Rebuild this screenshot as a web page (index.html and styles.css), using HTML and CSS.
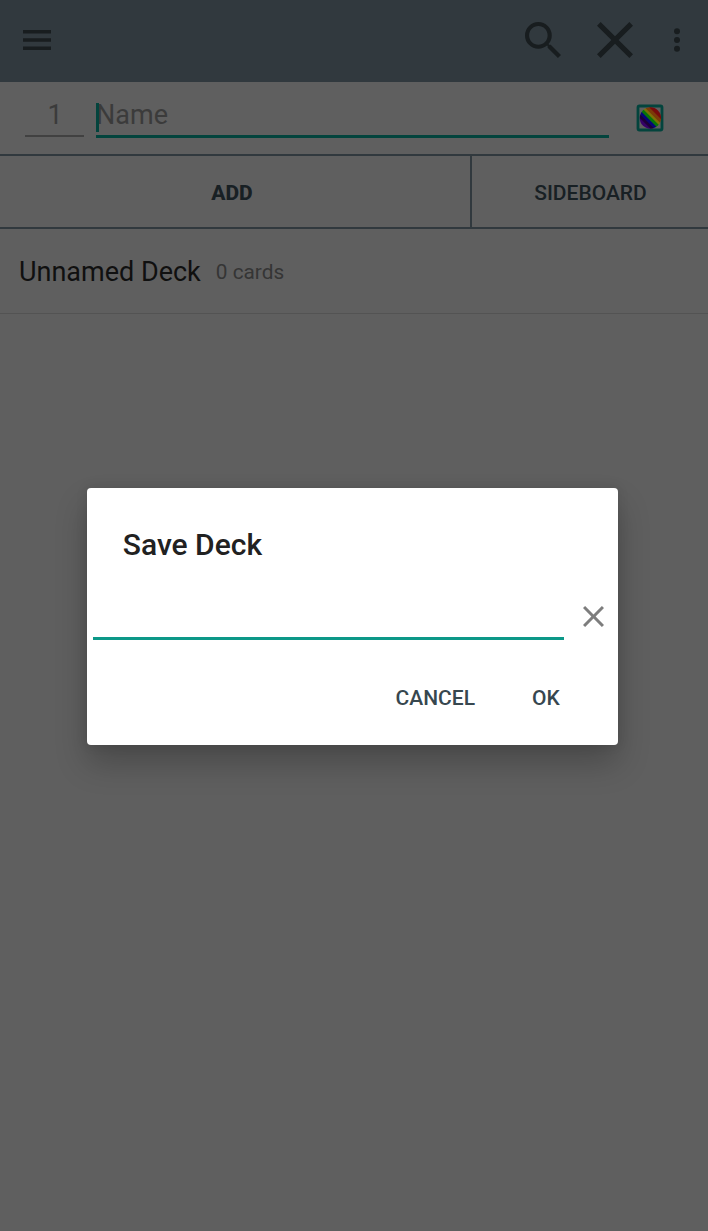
FILE: index.html
```html
<!DOCTYPE html>
<html lang="en">
<head>
<meta charset="utf-8">
<title>Deck editor</title>
<link rel="stylesheet" href="styles.css">
</head>
<body>
<header class="toolbar">
  <svg class="icon-menu" viewBox="0 0 28 20"><path d="M0 0h28v3.6H0zM0 8.2h28v3.6H0zM0 16.4h28v3.6H0z"/></svg>
  <svg class="icon-search" viewBox="3 3 17.49 17.49"><path d="M15.5 14h-.79l-.28-.27A6.471 6.471 0 0 0 16 9.5 6.5 6.5 0 1 0 9.5 16c1.61 0 3.09-.59 4.23-1.57l.27.28v.79l5 4.99L20.49 19l-4.99-5zm-6 0C7.01 14 5 11.99 5 9.5S7.01 5 9.5 5 14 7.01 14 9.5 11.99 14 9.5 14z"/></svg>
  <svg class="icon-close" viewBox="5 5 14 14"><path d="M19 6.41 17.59 5 12 10.59 6.41 5 5 6.41 10.59 12 5 17.59 6.41 19 12 13.41 17.59 19 19 17.59 13.41 12z"/></svg>
  <svg class="icon-more" viewBox="0 0 6 24"><circle cx="3" cy="3.2" r="3"/><circle cx="3" cy="12" r="3"/><circle cx="3" cy="20.8" r="3"/></svg>
</header>
<section class="entry">
  <div class="count">1</div>
  <div class="name"><span class="caret"></span>Name</div>
  <svg class="swatch" viewBox="0 0 28 28">
    <defs>
      <linearGradient id="rainbow" x1="1" y1="0" x2="0" y2="1">
        <stop offset=".26" stop-color="#780b0b"/>
        <stop offset=".3" stop-color="#7b3b08"/><stop offset=".37" stop-color="#7b3b08"/>
        <stop offset=".4" stop-color="#7b7205"/><stop offset=".45" stop-color="#7b7205"/>
        <stop offset=".48" stop-color="#087408"/><stop offset=".55" stop-color="#087408"/>
        <stop offset=".58" stop-color="#060678"/><stop offset=".64" stop-color="#060678"/>
        <stop offset=".67" stop-color="#1c0038"/><stop offset=".73" stop-color="#1c0038"/>
        <stop offset=".77" stop-color="#350068"/>
      </linearGradient>
    </defs>
    <rect class="swatch-box" x="2" y="2" width="24" height="24" rx="1.5"/>
    <circle cx="14.4" cy="14" r="10.7" fill="url(#rainbow)"/>
  </svg>
</section>
<nav class="tabs">
  <div class="tab tab-add">ADD</div>
  <div class="tab tab-side">SIDEBOARD</div>
</nav>
<section class="deck">
  <span class="deck-name">Unnamed Deck</span>
  <span class="deck-count">0 cards</span>
</section>
<div class="overlay">
  <div class="dialog">
    <h1 class="title">Save Deck</h1>
    <div class="field">
      <div class="input"></div>
      <svg class="icon-clear" viewBox="5 5 14 14"><path d="M19 6.41 17.59 5 12 10.59 6.41 5 5 6.41 10.59 12 5 17.59 6.41 19 12 13.41 17.59 19 19 17.59 13.41 12z"/></svg>
    </div>
    <div class="actions">
      <span class="action">CANCEL</span>
      <span class="action">OK</span>
    </div>
  </div>
</div>
</body>
</html>
```

FILE: styles.css
```css
* { box-sizing: border-box; }
body {
  margin: 0;
  height: 1231px;
  overflow: hidden;
  background: #5f5f5f;
  font-family: Roboto, "Liberation Sans", sans-serif;
}
svg { display: block; flex: none; }
.toolbar {
  display: flex;
  align-items: center;
  height: 82px;
  padding: 0 28px 2px 23px;
  background: #31393e;
  fill: #181d1f;
}
.icon-menu { width: 28px; height: 20px; margin-right: auto; }
.icon-search { width: 36px; height: 36px; margin-right: 36px; }
.icon-close { width: 36px; height: 36px; margin-right: 41px; }
.icon-more { width: 6px; height: 24px; }
.entry {
  display: flex;
  height: 72px;
  padding: 11px 44px 0 25px;
  font-size: 27px;
  line-height: 45px;
  color: #3b3b3b;
}
.count {
  width: 59px;
  height: 44px;
  margin-right: 12px;
  padding-left: 1px;
  border-bottom: 2px solid #414141;
  text-align: center;
}
.name {
  position: relative;
  width: 513px;
  height: 45px;
  margin-right: 27px;
  border-bottom: 3px solid #03443d;
}
.caret {
  position: absolute;
  left: 0;
  top: 10px;
  width: 3px;
  height: 29px;
  background: #03443d;
}
.swatch { width: 28px; height: 28px; margin-top: 11px; }
.swatch-box { fill: #5f5f5f; stroke: #03443d; stroke-width: 2.8; }
.tabs {
  display: flex;
  height: 75px;
  border-top: 2px solid #31393e;
  border-bottom: 2px solid #31393e;
}
.tab {
  display: flex;
  align-items: center;
  justify-content: center;
  padding-top: 2px;
  font-size: 21px;
  color: #182024;
}
.tab-add { width: 470px; padding-right: 6px; font-weight: 800; }
.tab-side { flex: 1; padding-left: 1px; border-left: 2px solid #31393e; font-weight: 500; }
.deck {
  display: flex;
  align-items: center;
  gap: 15px;
  height: 85px;
  padding: 1px 0 0 19px;
  border-bottom: 1px solid #535353;
}
.deck-name { font-size: 27px; color: #101010; }
.deck-count { font-size: 20.8px; color: #353535; }
.overlay {
  position: absolute;
  inset: 0;
  display: flex;
  align-items: flex-start;
  padding: 488px 0 0 87.4px;
}
.dialog {
  width: 530.4px;
  height: 257px;
  padding-left: 6px;
  border-radius: 4px;
  background: #fff;
  box-shadow: 0 18px 32px rgba(0, 0, 0, .23), 0 0 12px rgba(0, 0, 0, .1);
}
.title {
  margin: 0;
  padding: 37px 0 0 29.4px;
  font-size: 30px;
  line-height: 40px;
  font-weight: 500;
  color: #212121;
}
.field { display: flex; height: 75px; }
.input { width: 470.5px; border-bottom: 3px solid #0c9888; }
.icon-clear { width: 21px; height: 21px; margin: 40.5px 0 0 19.5px; fill: #7d7d7d; }
.actions {
  display: flex;
  justify-content: flex-end;
  gap: 57px;
  padding: 43px 58px 0 0;
  font-size: 21px;
  line-height: 31px;
  font-weight: 500;
  color: #37474f;
}
```
